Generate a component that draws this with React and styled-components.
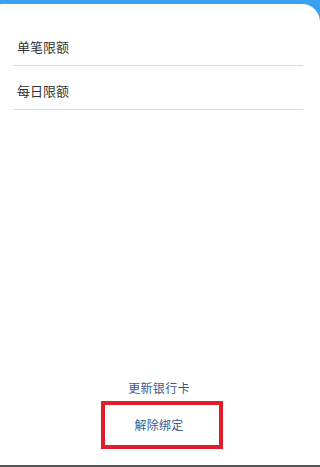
import React from 'react';
import styled, { createGlobalStyle } from 'styled-components';

const GlobalStyle = createGlobalStyle`
	html, body {
		margin: 0;
		padding: 0;
		background: #3f9ded;
	}
	body {
		font-family: "Noto Sans CJK SC", "Noto Sans", sans-serif;
	}
`;

const Page = styled.div`
	height: 467px;
	display: flex;
	flex-direction: column;
	background: linear-gradient(180deg, #3aa0f0, #4a9ce6);
	overflow: hidden;
`;

const Card = styled.div`
	flex: 1;
	margin-top: 4px;
	margin-left: -4px;
	background: #fff;
	border-radius: 6px 18px 0 0;
	display: flex;
	flex-direction: column;
	padding: 18px 17px 0 17px;
`;

const LimitList = styled.div`
	display: flex;
	flex-direction: column;
`;

const LimitRow = styled.div`
	height: 44px;
	box-sizing: border-box;
	display: flex;
	align-items: center;
	padding: 5px 0 0 4px;
	border-bottom: 1px solid #dcdcdc;
	font-size: 13px;
	color: #333;
`;

const Actions = styled.div`
	margin-top: auto;
	display: flex;
	flex-direction: column;
	align-items: center;
	padding-bottom: 16px;
`;

const ActionLink = styled.div`
	font-size: 12px;
	color: #3d5a8c;
	letter-spacing: 0.3px;
	line-height: 16px;
	margin-left: ${props => props.$shift || 0}px;
`;

const HighlightBox = styled.div`
	margin-top: 5px;
	margin-left: 8px;
	width: 122px;
	height: 48px;
	box-sizing: border-box;
	border: 4px solid #e31d2a;
	display: flex;
	align-items: center;
	justify-content: center;
`;

const BottomLine = styled.div`
	height: 2px;
	background: #555;
`;

class App extends React.Component {
	render() {
		const limits = ['单笔限额', '每日限额'];

		return (
			<Page>
				<GlobalStyle />
				<Card>
					<LimitList>
						{limits.map(name => (
							<LimitRow key={name}>{name}</LimitRow>
						))}
					</LimitList>
					<Actions>
						<ActionLink $shift={2}>更新银行卡</ActionLink>
						<HighlightBox>
							<ActionLink $shift={-6}>解除绑定</ActionLink>
						</HighlightBox>
					</Actions>
				</Card>
				<BottomLine />
			</Page>
		);
	}
}

export default App;
